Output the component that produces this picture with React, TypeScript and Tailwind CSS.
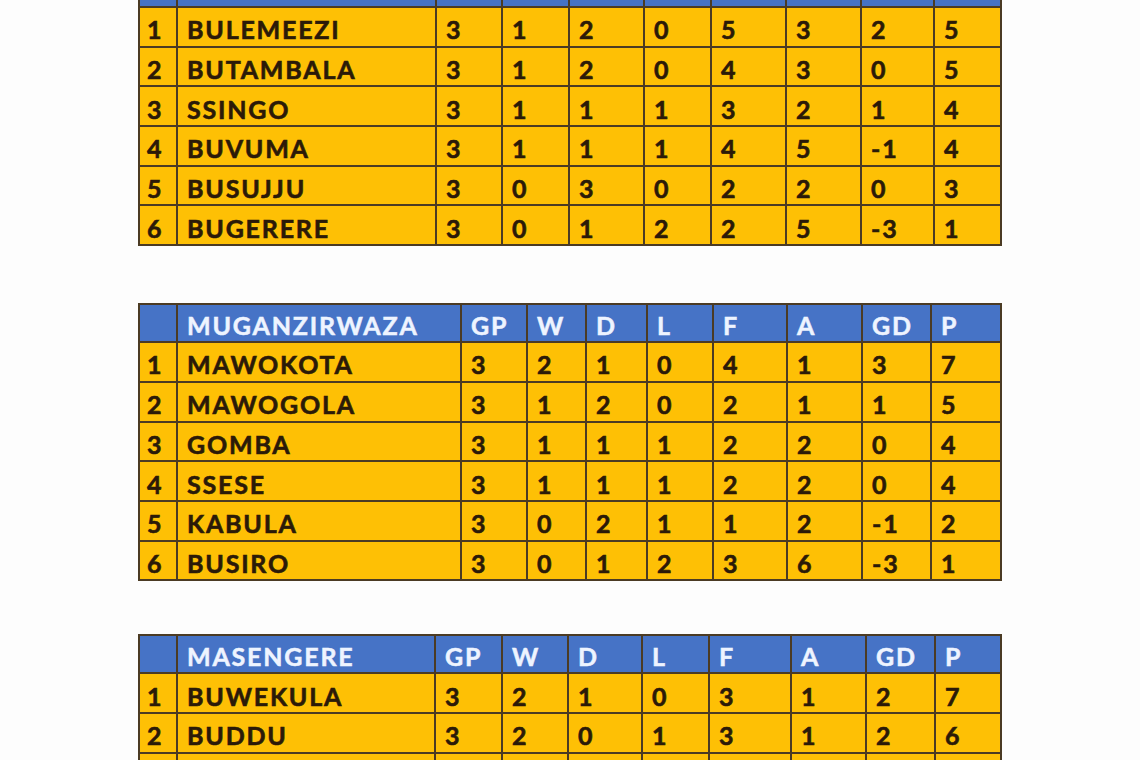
const groups = [
  {
    title: "",
    showHeads: false,
    cols: "grid-cols-[36px_257px_64px_65px_73px_65px_73px_73px_71px_1fr]",
    wrap: "mt-[-32px]",
    rows: [
      ["1", "BULEMEEZI", "3", "1", "2", "0", "5", "3", "2", "5"],
      ["2", "BUTAMBALA", "3", "1", "2", "0", "4", "3", "0", "5"],
      ["3", "SSINGO", "3", "1", "1", "1", "3", "2", "1", "4"],
      ["4", "BUVUMA", "3", "1", "1", "1", "4", "5", "-1", "4"],
      ["5", "BUSUJJU", "3", "0", "3", "0", "2", "2", "0", "3"],
      ["6", "BUGERERE", "3", "0", "1", "2", "2", "5", "-3", "1"],
    ],
  },
  {
    title: "MUGANZIRWAZA",
    showHeads: true,
    cols: "grid-cols-[36px_282px_64px_57px_59px_64px_72px_73px_67px_1fr]",
    wrap: "mt-[57px]",
    rows: [
      ["1", "MAWOKOTA", "3", "2", "1", "0", "4", "1", "3", "7"],
      ["2", "MAWOGOLA", "3", "1", "2", "0", "2", "1", "1", "5"],
      ["3", "GOMBA", "3", "1", "1", "1", "2", "2", "0", "4"],
      ["4", "SSESE", "3", "1", "1", "1", "2", "2", "0", "4"],
      ["5", "KABULA", "3", "0", "2", "1", "1", "2", "-1", "2"],
      ["6", "BUSIRO", "3", "0", "1", "2", "3", "6", "-3", "1"],
    ],
  },
  {
    title: "MASENGERE",
    showHeads: true,
    cols: "grid-cols-[36px_256px_65px_64px_72px_65px_80px_73px_67px_1fr]",
    wrap: "mt-[53px]",
    rows: [
      ["1", "BUWEKULA", "3", "2", "1", "0", "3", "1", "2", "7"],
      ["2", "BUDDU", "3", "2", "0", "1", "3", "1", "2", "6"],
      // row 3 only peeks in at the bottom edge
      ["", "", "", "", "", "", "", "", "", ""],
    ],
  },
];

const heads = ["GP", "W", "D", "L", "F", "A", "GD", "P"];

function Table({ g }: { g: (typeof groups)[number] }) {
  return (
    <div className={`${g.wrap} w-[864px] border-2 border-[#4b3b24] bg-[#4b3b24] grid gap-[2px] ${g.cols}`}>
      <div className="h-[36px] bg-[#4673c6]" />
      <div className="h-[36px] bg-[#4673c6] pl-[9px] pt-[4px] flex items-center text-[#eef4ff] [-webkit-text-stroke:0.5px_#eef4ff]">
        {g.title}
      </div>
      {heads.map((h) => (
        <div
          key={h}
          className="h-[36px] bg-[#4673c6] pl-[9px] pt-[4px] flex items-center text-[#eef4ff] [-webkit-text-stroke:0.5px_#eef4ff]"
        >
          {g.showHeads ? h : ""}
        </div>
      ))}
      {g.rows.map((r, ri) =>
        r.map((c, i) => (
          <div
            key={ri + "-" + i}
            className={`h-[37.7px] bg-[#fec005] flex items-center pt-[6px] text-[#2b1a08] [-webkit-text-stroke:0.6px_#2b1a08] ${i === 0 ? "pl-[7px]" : "pl-[9px]"}`}
          >
            {c}
          </div>
        ))
      )}
    </div>
  );
}

export default function App() {
  return (
    <div className="w-[1140px] h-[760px] overflow-hidden bg-[#fdfdfd] pl-[138px] font-['Lato','Liberation_Sans',sans-serif] font-bold tracking-[1.8px] text-[25px] leading-none">
      {groups.map((g, i) => (
        <Table key={i} g={g} />
      ))}
    </div>
  );
}
